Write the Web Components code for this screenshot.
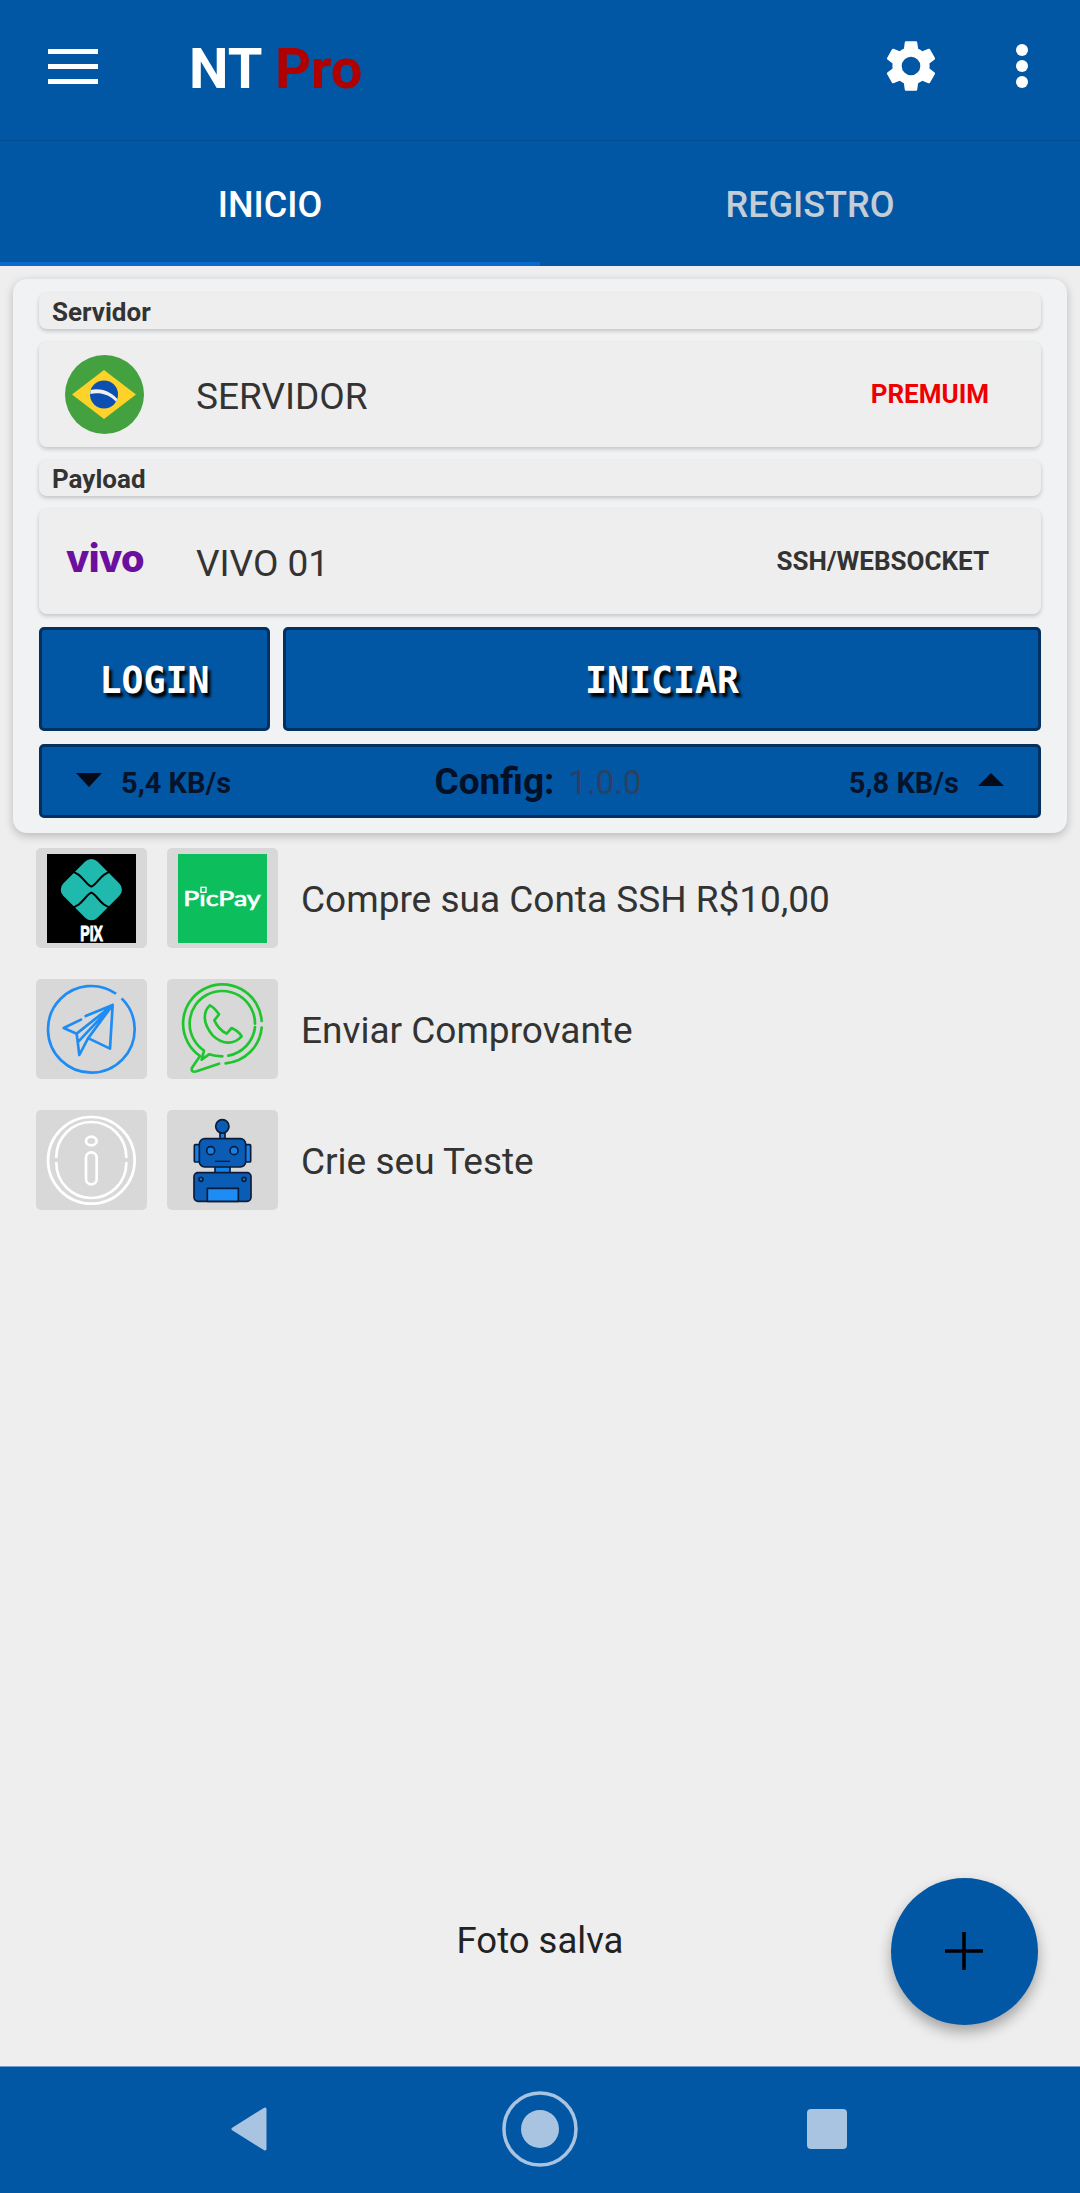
<!DOCTYPE html>
<html lang="pt"><head><meta charset="utf-8"><title>NT Pro</title>
<style>
html,body{margin:0;padding:0;background:#eee}
body{font-family:Roboto,"Liberation Sans",sans-serif;width:1080px;height:2193px;overflow:hidden}
</style></head><body>
<nt-app>
  <app-bar slot="top"></app-bar>
  <tab-bar slot="top"><tab-item active>INICIO</tab-item><tab-item>REGISTRO</tab-item></tab-bar>
  <vpn-card>
    <section-label>Servidor</section-label>
    <select-row value="PREMUIM" tone="red" name="SERVIDOR"><flag-br slot="icon"></flag-br></select-row>
    <section-label>Payload</section-label>
    <select-row value="SSH/WEBSOCKET" name="VIVO 01"><vivo-logo slot="icon"></vivo-logo></select-row>
    <action-row></action-row>
    <status-bar></status-bar>
  </vpn-card>
  <link-list>
    <link-row label="Compre sua Conta SSH R$10,00"><icon-pix slot="a"></icon-pix><icon-picpay slot="b"></icon-picpay></link-row>
    <link-row label="Enviar Comprovante"><icon-plane slot="a"></icon-plane><icon-whats slot="b"></icon-whats></link-row>
    <link-row label="Crie seu Teste"><icon-info slot="a"></icon-info><icon-robot slot="b"></icon-robot></link-row>
  </link-list>
  <toast-msg>Foto salva</toast-msg>
  <fab-button></fab-button>
  <nav-bar slot="bottom"></nav-bar>
</nt-app>
<script>
const BLUE='#0257a5';
function def(name,html,init){
  const t=document.createElement('template');t.innerHTML=html;
  customElements.define(name,class extends HTMLElement{
    constructor(){super();this.attachShadow({mode:'open'}).appendChild(t.content.cloneNode(true));}
    connectedCallback(){if(init)init(this);}
  });
}
const svgIcon=(vb,body)=>`<style>:host{display:block;width:89px;height:89px}svg{display:block;width:100%;height:100%;overflow:visible}</style><svg viewBox="${vb}" xmlns="http://www.w3.org/2000/svg">${body}</svg>`;

def('nt-app',`<style>
:host{display:flex;flex-direction:column;position:relative;width:1080px;height:2193px;background:#eee;color:#333;overflow:hidden}
main{flex:1;min-height:0;display:flex;flex-direction:column}
</style><slot name="top"></slot><main><slot></slot></main><slot name="bottom"></slot>`);

def('app-bar',`<style>
:host{display:flex;align-items:center;height:141px;box-sizing:border-box;background:${BLUE};border-bottom:1px solid #024e95;padding:0 0 8px 48px;color:#fff}
.menu{width:50px;height:35px;display:flex;flex-direction:column;justify-content:space-between}
.menu i{display:block;height:5px;background:#fff}
.title{margin-left:91px;font:700 56px/60px Roboto,sans-serif;white-space:pre;position:relative;top:3px}
.title b{color:#b00000;font-weight:700}
.sp{flex:1}
.gear{width:62px;height:62px;display:block}
.dots{width:14px;height:46px;display:block;margin:0 51px 0 73px}
</style>
<div class="menu"><i></i><i></i><i></i></div>
<div class="title">NT <b>Pro</b></div>
<div class="sp"></div>
<svg class="gear" viewBox="0 0 24 24"><path fill="#fff" d="M19.14 12.94c.04-.3.06-.61.06-.94 0-.32-.02-.64-.07-.94l2.03-1.58a.49.49 0 0 0 .12-.61l-1.92-3.32a.49.49 0 0 0-.59-.22l-2.39.96c-.5-.38-1.03-.7-1.62-.94l-.36-2.54a.48.48 0 0 0-.48-.41h-3.84c-.24 0-.43.17-.47.41l-.36 2.54c-.59.24-1.13.57-1.62.94l-2.39-.96a.49.49 0 0 0-.59.22L2.74 8.87c-.12.21-.08.47.12.61l2.03 1.58c-.05.3-.09.63-.09.94s.02.64.07.94l-2.03 1.58a.49.49 0 0 0-.12.61l1.92 3.32c.12.22.37.29.59.22l2.39-.96c.5.38 1.03.7 1.62.94l.36 2.54c.05.24.24.41.48.41h3.84c.24 0 .44-.17.47-.41l.36-2.54c.59-.24 1.13-.56 1.62-.94l2.39.96c.22.08.47 0 .59-.22l1.92-3.32c.12-.22.07-.47-.12-.61l-2.01-1.58zM12 15.6A3.6 3.6 0 1 1 12 8.4a3.6 3.6 0 0 1 0 7.2z"/></svg>
<svg class="dots" viewBox="0 0 14 46"><circle cx="7" cy="7" r="6" fill="#fff"/><circle cx="7" cy="23" r="6" fill="#fff"/><circle cx="7" cy="39" r="6" fill="#fff"/></svg>`);

def('tab-bar',`<style>:host{display:flex;height:125px;background:${BLUE}}</style><slot></slot>`);
def('tab-item',`<style>
:host{flex:1;display:flex;align-items:center;justify-content:center;box-sizing:border-box;height:125px;padding-top:6px;font:500 36px/42px Roboto,sans-serif;color:#c4ccd6;border-bottom:4px solid transparent}
:host([active]){color:#fff;border-bottom-color:#0a69cc}
</style><slot></slot>`);

def('vpn-card',`<style>
:host{display:flex;flex-direction:column;gap:13px;box-sizing:border-box;margin:13px 13px 0;padding:14px 26px;height:554px;background:#f1f2f3;border-radius:14px;box-shadow:0 3px 10px rgba(0,0,0,.22)}
</style><slot></slot>`);

def('section-label',`<style>
:host{display:flex;align-items:center;height:36px;box-sizing:border-box;padding:1px 13px 0;background:#eee;border-radius:8px;font:700 26px/30px Roboto,sans-serif;color:#333;box-shadow:0 2px 4px rgba(0,0,0,.2)}
</style><slot></slot>`);

def('select-row',`<style>
:host{display:flex;align-items:center;height:105px;box-sizing:border-box;background:#eee;border-radius:8px;box-shadow:0 2px 4px rgba(0,0,0,.2);padding:0 52px 0 26px}
.ic{width:131px;flex:none;display:flex;align-items:center}
.name{flex:1;font:400 37px/42px Roboto,sans-serif;color:#333;position:relative;top:2px}
.val{font:700 26px/30px Roboto,sans-serif;color:#333;position:relative;top:-1px}
:host([tone=red]) .val{color:#ee0000}
</style><div class="ic"><slot name="icon"></slot></div><div class="name"></div><div class="val"></div>`,
el=>{el.shadowRoot.querySelector('.name').textContent=el.getAttribute('name');el.shadowRoot.querySelector('.val').textContent=el.getAttribute('value');});

def('flag-br',`<style>:host{display:block;width:79px;height:79px}svg{display:block}</style>
<svg width="79" height="79" viewBox="0 0 79 79"><circle cx="39.5" cy="39.5" r="39.5" fill="#43a13f"/><path d="M7 39.5 39 15 71 39.5 39 64Z" fill="#fdd32a"/><circle cx="39" cy="39.5" r="14" fill="#0c4fb3"/><path d="M25.6 35c9-2 19 .5 26.6 9l-1 3c-7-8-17-10-26-8z" fill="#f1f1f1"/></svg>`);

def('vivo-logo',`<style>:host{display:block;color:#6a0f9e;font:800 38px/40px Inter,"Noto Sans",sans-serif;letter-spacing:-.6px;width:80px;margin-left:1px;position:relative;top:-4px}</style>vivo`);

def('action-row',`<style>
:host{display:flex;gap:13px;height:104px}
.b{box-sizing:border-box;border:3px solid #03305f;border-radius:5px;background:${BLUE};display:flex;align-items:center;justify-content:center;padding-top:3px;font:700 36.5px/42px "DejaVu Sans Mono","Liberation Mono",monospace;color:#fff;text-shadow:3px 4px 3px #000}
.l{width:231px;flex:none}.i{flex:1}
</style><div class="b l">LOGIN</div><div class="b i">INICIAR</div>`);

def('status-bar',`<style>
:host{display:grid;grid-template-columns:1fr auto 1fr;align-items:center;height:74px;box-sizing:border-box;border:3px solid #03305f;border-radius:5px;background:${BLUE};padding:3px 34px 0;color:#06142b;font:700 29px/32px Roboto,sans-serif}
.side{display:flex;align-items:center;gap:19px}
.r{justify-content:flex-end}
.c{font-size:37px;line-height:42px;white-space:pre;color:#041026;position:relative;left:-2px}
.c span{font-weight:400;font-size:33px;color:#2c4060;margin-left:14px}
svg{display:block;flex:none;position:relative;top:-3px}
</style>
<div class="side"><svg width="26" height="14" viewBox="0 0 26 14"><path d="M0 0H26L13 14Z" fill="#040a18"/></svg><span>5,4 KB/s</span></div>
<div class="c">Config:<span>1.0.0</span></div>
<div class="side r"><span>5,8 KB/s</span><svg width="26" height="13" viewBox="0 0 26 13"><path d="M0 13H26L13 0Z" fill="#040a18"/></svg></div>`);

def('link-list',`<style>:host{display:flex;flex-direction:column;gap:31px;margin:15px 0 0 36px}</style><slot></slot>`);
def('link-row',`<style>
:host{display:flex;align-items:center;height:100px}
.t{width:111px;height:100%;flex:none;box-sizing:border-box;background:#d8d8d8;border-radius:5px;display:flex;align-items:center;justify-content:center}
.t+.t{margin-left:20px}
.l{margin-left:23px;padding-top:4px;font:400 37px/42px Roboto,sans-serif;color:#333}
</style><div class="t"><slot name="a"></slot></div><div class="t"><slot name="b"></slot></div><div class="l"></div>`,
el=>{el.shadowRoot.querySelector('.l').textContent=el.getAttribute('label');});

def('icon-pix',svgIcon('81 40 267 267',`<rect x="81" y="40" width="267" height="267" fill="#000"/>
<rect x="141.500" y="74.500" width="145" height="145" rx="26" fill="#1fb9ae" transform="rotate(45 214 147)"/>
<path d="M150 92C185 96 195 130 214 138 233 130 243 96 278 92M150 202C185 198 195 164 214 156 233 164 243 198 278 202" fill="none" stroke="#000" stroke-width="6"/>
<text x="215" y="302" text-anchor="middle" fill="#fff" stroke="#fff" stroke-width="3" font-family="'Liberation Sans Narrow','Liberation Sans',sans-serif" font-weight="700" font-size="64" textLength="68" lengthAdjust="spacingAndGlyphs">PIX</text>`));

def('icon-picpay',svgIcon('474 40 267 267',`<rect x="474" y="40" width="267" height="267" fill="#0cbf5c"/>
<text x="490" y="196" fill="#fff" font-family="Lato,'Open Sans',sans-serif" font-weight="400" font-size="63" stroke="#fff" stroke-width="2" textLength="232" lengthAdjust="spacingAndGlyphs">PicPay</text>
<rect x="543" y="140" width="15" height="15" fill="#0cbf5c" stroke="#fff" stroke-width="4"/>`));

def('icon-plane',svgIcon('81 44 267 267',`<g fill="none" stroke="#1e8cf5" stroke-width="8" stroke-linecap="round" stroke-linejoin="round">
<circle cx="214" cy="177" r="130" pathLength="360" stroke-dasharray="350 10" stroke-linecap="butt" transform="rotate(-45.600 214 177)"/>
<path d="M197 137 278 104 270 235 206 204M183 148 131 173 170 190 178 254 204 204 278 104 170 190M175 214 278 104"/></g>`));

def('icon-whats',svgIcon('474 44 267 267',`<g fill="none" stroke="#1ec52e" stroke-width="8" stroke-linecap="round" stroke-linejoin="round">
<path d="M725 152A118 118 0 1 0 540 257L516 292Q512 308 530 303L597 280"/>
<path d="M617 279A118 118 0 0 0 725 172"/>
<path d="M705 160A98 98 0 1 0 552 241L545 268 567 252Q585 258 607 258"/>
<path d="M625 256A98 98 0 0 0 705 170"/>
<path d="M570 105C548 125 548 160 578 195 605 222 640 225 665 198 660 188 645 178 635 173L620 190C600 180 590 165 583 150L597 132C590 122 580 110 570 105Z"/></g>`));

def('icon-info',svgIcon('81 437 267 267',`<g fill="none" stroke="#fff" stroke-width="8" stroke-linecap="round">
<circle cx="214" cy="570" r="130"/>
<path d="M109 560A105 105 0 0 1 319 560M109 578A105 105 0 0 0 319 578"/>
<ellipse cx="214" cy="512" rx="16" ry="13"/>
<rect x="198" y="546" width="32" height="96" rx="16"/></g>`));

def('icon-robot',svgIcon('474 437 267 267',`<g stroke="#0c1c38" stroke-width="5" stroke-linejoin="round">
<rect x="600" y="488" width="15" height="20" fill="#1580e8"/>
<circle cx="607" cy="468" r="20" fill="#0a5cb5"/>
<rect x="523" y="523" width="17" height="52" rx="3" fill="#1580e8"/>
<rect x="675" y="523" width="17" height="52" rx="3" fill="#1580e8"/>
<rect x="585" y="588" width="45" height="20" fill="#1580e8"/>
<rect x="538" y="505" width="139" height="85" rx="16" fill="#0a5cb5"/>
<circle cx="572" cy="541" r="12" fill="#1580e8"/><circle cx="642" cy="541" r="12" fill="#1580e8"/>
<path d="M585 573H630" fill="none" stroke-width="4"/>
<rect x="522" y="607" width="171" height="86" rx="12" fill="#0a5cb5"/>
<circle cx="543" cy="627" r="6" fill="#1580e8"/><circle cx="672" cy="627" r="6" fill="#1580e8"/>
<rect x="562" y="654" width="93" height="39" fill="#1e8cf5"/></g>`));

def('toast-msg',`<style>:host{position:absolute;left:0;right:0;top:1921px;text-align:center;font:400 36.5px/40px Roboto,sans-serif;color:#222}</style><slot></slot>`);

def('fab-button',`<style>
:host{position:absolute;left:891px;top:1878px;width:147px;height:147px;border-radius:50%;background:${BLUE};box-shadow:0 7px 14px rgba(0,0,0,.32);display:flex;align-items:center;justify-content:center}
svg{display:block;position:relative;left:-1px;top:-1px}</style><svg width="38" height="38" viewBox="0 0 38 38"><path d="M19 0V38M0 19H38" stroke="#000" stroke-width="3.6"/></svg>`);

def('nav-bar',`<style>
:host{display:flex;align-items:center;height:127px;box-sizing:border-box;background:${BLUE};border-top:1px solid #6f9fcf;padding-left:231px;padding-bottom:2px}
svg{display:block;flex:none}
</style>
<svg width="36" height="44" viewBox="0 0 36 44"><path d="M34 2 2 22 34 42Z" fill="#a8c4e0" stroke="#a8c4e0" stroke-width="3" stroke-linejoin="round"/></svg>
<svg style="margin-left:235px" width="76" height="76" viewBox="0 0 76 76"><circle cx="38" cy="38" r="36" fill="none" stroke="#a8c4e0" stroke-width="3.500"/><circle cx="38" cy="38" r="19" fill="#a8c4e0"/></svg>
<svg style="margin-left:229px" width="40" height="40" viewBox="0 0 40 40"><rect width="40" height="40" rx="4" fill="#a8c4e0"/></svg>`);
</script>
</body></html>
